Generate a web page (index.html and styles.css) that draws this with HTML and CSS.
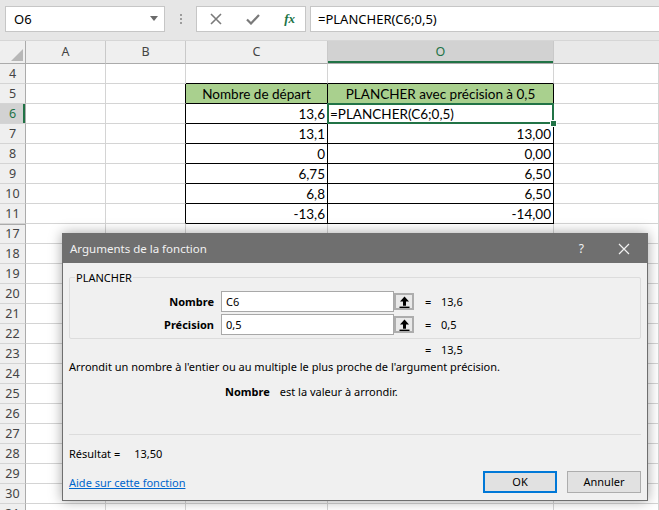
FILE: index.html
```html
<!DOCTYPE html>
<html lang="fr">
<head>
    <meta charset="UTF-8">
    <meta name="viewport" content="width=device-width, initial-scale=1.0">
    <title>PLANCHER</title>
    <link rel="stylesheet" href="styles.css">
</head>
<body>

<div class="toolbar">
    <div class="name-box">
        <span>O6</span>
        <svg class="drop" width="8" height="5" viewBox="0 0 8 5"><path d="M0 0h8L4 5z" fill="#6b6b6b"/></svg>
    </div>
    <div class="grip"><i></i><i></i><i></i></div>
    <div class="fx-box">
        <svg width="12" height="12" viewBox="0 0 12 12"><path d="M1 1l10 10M11 1L1 11" stroke="#7a7a7a" stroke-width="1.6"/></svg>
        <svg width="14" height="12" viewBox="0 0 14 12"><path d="M1 6.5l4 4L13 2" stroke="#7a7a7a" stroke-width="2.2" fill="none"/></svg>
        <span class="fx">fx</span>
    </div>
    <div class="formula">=PLANCHER(C6;0,5)</div>
</div>

<table class="grid">
    <colgroup>
        <col class="w-head"><col class="w-a"><col class="w-b"><col class="w-c"><col class="w-o"><col>
    </colgroup>
    <tr class="heads">
        <th class="corner"><svg width="12" height="12" viewBox="0 0 12 12"><path d="M12 0v12H0z" fill="#b7b7b7"/></svg></th>
        <th>A</th><th>B</th><th>C</th><th class="sel">O</th><th class="rest"></th>
    </tr>
    <tr><th>4</th><td></td><td></td><td class="above"></td><td class="above"></td><td></td></tr>
    <tr><th>5</th><td></td><td class="left-of"></td><td class="tb hdr">Nombre de départ</td><td class="tb hdr">PLANCHER avec précision à 0,5</td><td></td></tr>
    <tr><th class="sel">6</th><td></td><td class="left-of"></td><td class="tb num">13,6</td><td class="tb active">=PLANCHER(C6;0,5)</td><td></td></tr>
    <tr><th>7</th><td></td><td class="left-of"></td><td class="tb num">13,1</td><td class="tb num">13,00</td><td></td></tr>
    <tr><th>8</th><td></td><td class="left-of"></td><td class="tb num">0</td><td class="tb num">0,00</td><td></td></tr>
    <tr><th>9</th><td></td><td class="left-of"></td><td class="tb num">6,75</td><td class="tb num">6,50</td><td></td></tr>
    <tr><th>10</th><td></td><td class="left-of"></td><td class="tb num">6,8</td><td class="tb num">6,50</td><td></td></tr>
    <tr><th>11</th><td></td><td class="left-of"></td><td class="tb num">-13,6</td><td class="tb num">-14,00</td><td></td></tr>
    <tr class="after-hidden"><th>17</th><td></td><td></td><td></td><td></td><td></td></tr>
    <tr><th>18</th><td></td><td></td><td></td><td></td><td></td></tr>
    <tr><th>19</th><td></td><td></td><td></td><td></td><td></td></tr>
    <tr><th>20</th><td></td><td></td><td></td><td></td><td></td></tr>
    <tr><th>21</th><td></td><td></td><td></td><td></td><td></td></tr>
    <tr><th>22</th><td></td><td></td><td></td><td></td><td></td></tr>
    <tr><th>23</th><td></td><td></td><td></td><td></td><td></td></tr>
    <tr><th>24</th><td></td><td></td><td></td><td></td><td></td></tr>
    <tr><th>25</th><td></td><td></td><td></td><td></td><td></td></tr>
    <tr><th>26</th><td></td><td></td><td></td><td></td><td></td></tr>
    <tr><th>27</th><td></td><td></td><td></td><td></td><td></td></tr>
    <tr><th>28</th><td></td><td></td><td></td><td></td><td></td></tr>
    <tr><th>29</th><td></td><td></td><td></td><td></td><td></td></tr>
    <tr><th>30</th><td></td><td></td><td></td><td></td><td></td></tr>
    <tr><th>31</th><td></td><td></td><td></td><td></td><td></td></tr>
</table>

<div class="dialog">
    <div class="dialog-title">
        <span class="title-text">Arguments de la fonction</span>
        <span class="help">?</span>
        <svg class="close" width="12" height="12" viewBox="0 0 12 12"><path d="M1 1l10 10M11 1L1 11" stroke="#f2f2f2" stroke-width="1.2"/></svg>
    </div>
    <div class="dialog-body">
        <fieldset class="group">
            <legend>PLANCHER</legend>
            <div class="arg">
                <label>Nombre</label>
                <div class="field">C6</div>
                <div class="pick"><svg width="11" height="12" viewBox="0 0 11 12"><path d="M5.5 0.5L1 5.5h3v4.2h3V5.5h3z" fill="#000"/><path d="M0.5 11.3h10" stroke="#000" stroke-width="1.4"/></svg></div>
                <span class="eq">=</span>
                <span class="val">13,6</span>
            </div>
            <div class="arg">
                <label>Précision</label>
                <div class="field">0,5</div>
                <div class="pick"><svg width="11" height="12" viewBox="0 0 11 12"><path d="M5.5 0.5L1 5.5h3v4.2h3V5.5h3z" fill="#000"/><path d="M0.5 11.3h10" stroke="#000" stroke-width="1.4"/></svg></div>
                <span class="eq">=</span>
                <span class="val">0,5</span>
            </div>
        </fieldset>
        <div class="total"><span class="eq">=</span><span class="val">13,5</span></div>
        <p class="desc">Arrondit un nombre à l'entier ou au multiple le plus proche de l'argument précision.</p>
        <p class="arg-desc"><b>Nombre</b>est la valeur à arrondir.</p>
        <div class="sep"></div>
        <div class="result"><span>Résultat =</span><span>13,50</span></div>
        <div class="footer">
            <a href="#" class="help-link">Aide sur cette fonction</a>
            <div class="btn default">OK</div>
            <div class="btn">Annuler</div>
        </div>
    </div>
</div>

</body>
</html>
```

FILE: styles.css
```css
body {
    margin: 0;
    width: 659px;
    height: 510px;
    overflow: hidden;
    position: relative;
    background-color: #fff;
    font-family: "Noto Sans", "Open Sans", sans-serif;
    color: #000;
}

/* formula bar */
.toolbar {
    display: flex;
    align-items: center;
    height: 41px;
    padding: 0 0 3px 5px;
    box-sizing: border-box;
    background-color: #e6e6e6;
    border-bottom: 1px solid #d6d6d6;
}
.name-box {
    display: flex;
    align-items: center;
    justify-content: space-between;
    width: 160px;
    height: 26px;
    box-sizing: border-box;
    padding: 0 6px 0 8px;
    background-color: #fff;
    border: 1px solid #c6c6c6;
    font-size: 13px;
}
.grip {
    display: flex;
    flex-direction: column;
    gap: 2px;
    width: 31px;
    align-items: center;
}
.grip i {
    width: 2px;
    height: 2px;
    background-color: #9c9c9c;
}
.fx-box {
    display: flex;
    align-items: center;
    justify-content: space-between;
    width: 110px;
    height: 26px;
    box-sizing: border-box;
    padding: 0 10px 0 13px;
    background-color: #fff;
    border: 1px solid #c6c6c6;
}
.fx {
    font-family: "Liberation Serif", serif;
    font-style: italic;
    font-weight: bold;
    font-size: 13px;
    color: #217346;
}
.formula {
    flex: 1;
    height: 26px;
    margin-left: 4px;
    box-sizing: border-box;
    padding-left: 7px;
    line-height: 24px;
    background-color: #fff;
    border: 1px solid #c6c6c6;
    border-right: none;
    font-size: 13px;
}

/* sheet */
.grid {
    table-layout: fixed;
    width: 659px;
    border-collapse: separate;
    border-spacing: 0;
    font-family: Lato, "Noto Sans", sans-serif;
    font-size: 13.5px;
}
.w-head { width: 26px; }
.w-a { width: 80px; }
.w-b { width: 80px; }
.w-c { width: 142px; }
.w-o { width: 226px; }
.grid td,
.grid th {
    height: 19px;
    padding: 0 2px;
    border-right: 1px solid #d4d4d4;
    border-bottom: 1px solid #d4d4d4;
    white-space: nowrap;
    overflow: hidden;
    line-height: 18px;
}
.grid th {
    background-color: #efefef;
    border-right-color: #ababab;
    font-family: "Noto Sans", sans-serif;
    font-weight: normal;
    font-size: 12.5px;
    color: #444;
    text-align: center;
}
.grid .heads th {
    height: 20px;
    border-right-color: #c9c9c9;
    border-bottom-color: #ababab;
}
.grid .heads .corner {
    border-right-color: #ababab;
    text-align: right;
    vertical-align: bottom;
    padding: 0 2px 2px 0;
    line-height: 0;
}
.grid .heads .rest {
    background-color: #e9e9e9;
    border-right: none;
}
.grid th.sel {
    background-color: #d2d2d2;
    color: #217346;
    box-shadow: inset -2px 0 0 #217346;
}
.grid .heads > th.sel {
    box-shadow: inset 0 -2px 0 #217346;
}
.after-hidden th {
    height: 18px;
    border-top: 1px solid #ababab;
}
.after-hidden td {
    height: 18px;
}

.grid .above { border-bottom-color: #000; }
.grid .left-of { border-right-color: #000; }
.grid .tb {
    border-right-color: #000;
    border-bottom-color: #000;
}
.hdr {
    background-color: #a9d08e;
    text-align: center;
}
.num { text-align: right; }
.active {
    position: relative;
    overflow: visible !important;
}
.active::before {
    content: "";
    position: absolute;
    top: -1px;
    left: -1px;
    right: -1px;
    bottom: -1px;
    border: 2px solid #217346;
}
.active::after {
    content: "";
    position: absolute;
    right: -4px;
    bottom: -4px;
    width: 5px;
    height: 5px;
    background-color: #217346;
    border: 1px solid #fff;
}

/* dialog */
.dialog {
    position: absolute;
    left: 62px;
    top: 233px;
    width: 586px;
    height: 268px;
    box-sizing: border-box;
    background-color: #f0f0f0;
    border: 1px solid #6f6f6f;
    box-shadow: 0 0 12px rgba(0, 0, 0, 0.35);
    font-size: 11px;
}
.dialog-title {
    display: flex;
    align-items: center;
    height: 29px;
    padding: 0 17px 0 7px;
    background-color: #6f6f6f;
    color: #f2f2f2;
}
.title-text {
    flex: 1;
    font-size: 11.5px;
}
.help {
    margin-right: 34px;
    font-size: 12px;
}
.dialog-body {
    padding: 0 6px;
}
.group {
    margin: 7px 0 0;
    padding: 6px 0 3px 5px;
    border: 1px solid #dcdcdc;
    border-radius: 2px;
}
.group legend {
    padding: 0 1px;
    line-height: 15px;
}
.arg {
    display: flex;
    align-items: center;
    height: 21px;
    margin-bottom: 2px;
}
.arg:last-child { margin-bottom: 0; }
.arg label {
    width: 139px;
    padding-right: 7px;
    text-align: right;
    font-weight: bold;
}
.field {
    width: 173px;
    height: 21px;
    box-sizing: border-box;
    padding-left: 4px;
    line-height: 19px;
    background-color: #fff;
    border: 1px solid #a8a8a8;
}
.pick {
    display: flex;
    align-items: center;
    justify-content: center;
    width: 20px;
    height: 17px;
    box-sizing: border-box;
    background-color: #e9e9e9;
    border: 2px solid #adadad;
}
.eq {
    margin-left: 11px;
    width: 16px;
}
.total {
    display: flex;
    height: 20px;
    padding-left: 345px;
    align-items: center;
}
.desc {
    margin: 0;
    line-height: 16px;
}
.arg-desc {
    margin: 9px 0 0;
    padding-left: 156px;
    line-height: 16px;
}
.arg-desc b {
    margin-right: 10px;
}
.sep {
    height: 1px;
    margin-top: 34px;
    background-color: #dcdcdc;
}
.result {
    display: flex;
    gap: 14px;
    margin-top: 11px;
    line-height: 16px;
}
.footer {
    display: flex;
    align-items: center;
    gap: 10px;
    margin-top: 9px;
}
.help-link {
    flex: 1;
    color: #0066cc;
}
.btn {
    width: 74px;
    height: 22px;
    box-sizing: border-box;
    line-height: 20px;
    text-align: center;
    background-color: #e1e1e1;
    border: 1px solid #adadad;
}
.btn.default {
    border: 2px solid #0078d7;
    line-height: 18px;
}
```
